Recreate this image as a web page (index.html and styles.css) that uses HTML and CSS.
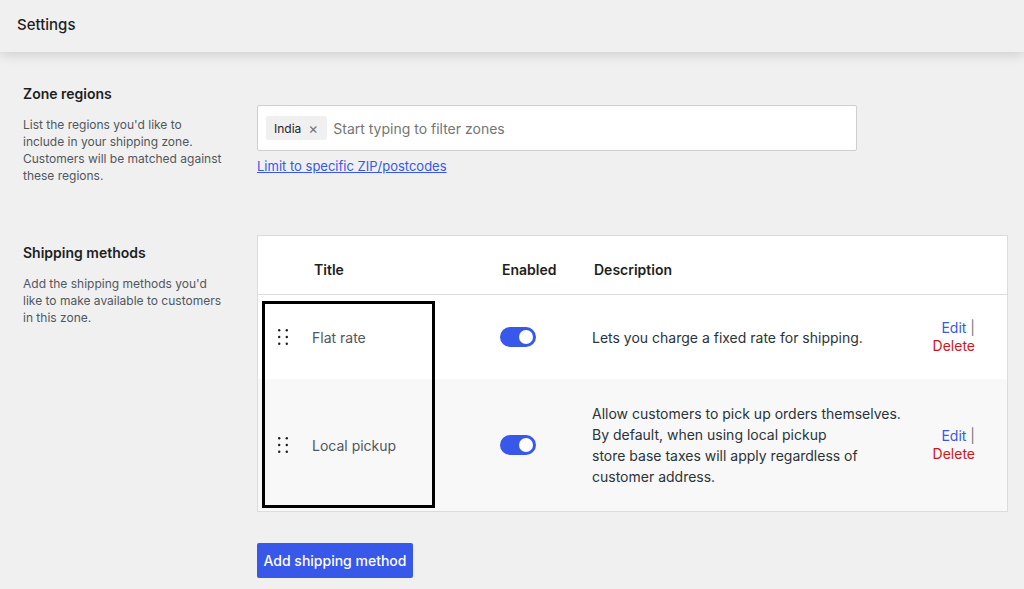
FILE: index.html
```html
<!DOCTYPE html>
<html lang="en">
<head>
    <meta charset="UTF-8">
    <meta name="viewport" content="width=device-width, initial-scale=1.0">
    <title>Shipping zone settings</title>
    <link rel="stylesheet" href="styles.css">
</head>
<body>
    <header class="top-bar">
        <h1 class="top-title">Settings</h1>
    </header>

    <main class="settings">
        <section class="settings-section zone-section">
            <div class="section-info">
                <h2 class="section-title">Zone regions</h2>
                <p class="section-desc">List the regions you'd like to<br>include in your shipping zone.<br>Customers will be matched against<br>these regions.</p>
            </div>
            <div class="section-body zone-body">
                <div class="zone-input">
                    <span class="chip">India <span class="chip-remove">&times;</span></span>
                    <span class="placeholder">Start typing to filter zones</span>
                </div>
                <a href="#" class="zone-link">Limit to specific ZIP/postcodes</a>
            </div>
        </section>

        <section class="settings-section methods-section">
            <div class="section-info methods-info">
                <h2 class="section-title">Shipping methods</h2>
                <p class="section-desc">Add the shipping methods you'd<br>like to make available to customers<br>in this zone.</p>
            </div>
            <div class="section-body">
                <div class="methods-table">
                    <div class="methods-row methods-head">
                        <div></div>
                        <div class="head-cell">Title</div>
                        <div class="head-cell">Enabled</div>
                        <div class="head-cell">Description</div>
                        <div></div>
                    </div>

                    <div class="methods-row">
                        <div class="cell-handle">
                            <svg class="handle" width="10" height="16" viewBox="0 0 10 16">
                                <circle cx="1.2" cy="1.2" r="1.2"/><circle cx="8.8" cy="1.2" r="1.2"/>
                                <circle cx="1.2" cy="8" r="1.2"/><circle cx="8.8" cy="8" r="1.2"/>
                                <circle cx="1.2" cy="14.8" r="1.2"/><circle cx="8.8" cy="14.8" r="1.2"/>
                            </svg>
                        </div>
                        <div class="cell-title">Flat rate</div>
                        <div class="cell-toggle"><span class="toggle"><span class="toggle-knob"></span></span></div>
                        <div class="cell-desc">Lets you charge a fixed rate for shipping.</div>
                        <div class="cell-actions">
                            <a href="#" class="edit-link">Edit</a> <span class="sep">|</span><br>
                            <a href="#" class="delete-link">Delete</a>
                        </div>
                    </div>

                    <div class="methods-row row-alt">
                        <div class="cell-handle">
                            <svg class="handle" width="10" height="16" viewBox="0 0 10 16">
                                <circle cx="1.2" cy="1.2" r="1.2"/><circle cx="8.8" cy="1.2" r="1.2"/>
                                <circle cx="1.2" cy="8" r="1.2"/><circle cx="8.8" cy="8" r="1.2"/>
                                <circle cx="1.2" cy="14.8" r="1.2"/><circle cx="8.8" cy="14.8" r="1.2"/>
                            </svg>
                        </div>
                        <div class="cell-title">Local pickup</div>
                        <div class="cell-toggle"><span class="toggle"><span class="toggle-knob"></span></span></div>
                        <div class="cell-desc">Allow customers to pick up orders themselves.<br>By default, when using local pickup<br>store base taxes will apply regardless of<br>customer address.</div>
                        <div class="cell-actions">
                            <a href="#" class="edit-link">Edit</a> <span class="sep">|</span><br>
                            <a href="#" class="delete-link">Delete</a>
                        </div>
                    </div>

                    <!-- highlight box over the title column -->
                    <div class="highlight-box"></div>
                </div>

                <button class="add-button">Add shipping method</button>
            </div>
        </section>
    </main>
</body>
</html>
```

FILE: styles.css
```css
* {
    margin: 0;
    padding: 0;
    box-sizing: border-box;
}

body {
    font-family: Inter, "Noto Sans", sans-serif;
    background: #f0f0f0;
    color: #1e1e1e;
    height: 589px;
    overflow: hidden;
}

/* top bar */
.top-bar {
    height: 52px;
    display: flex;
    align-items: center;
    padding: 0 0 4px 17px;
    background: #f0f0f0;
    box-shadow: 0 2px 12px rgba(0, 0, 0, 0.16);
    position: relative;
}

.top-title {
    font-size: 15px;
    font-weight: 500;
    color: #1e1e1e;
}

/* sections */
.settings {
    padding: 32px 16px 0 23px;
}

.settings-section {
    display: grid;
    grid-template-columns: 234px 1fr;
    align-items: start;
}

.zone-section {
    margin-bottom: 51px;
}

.methods-info {
    padding-top: 8px;
}

.section-title {
    font-size: 14px;
    font-weight: 600;
    line-height: 20px;
    color: #1e1e1e;
}

.section-desc {
    margin-top: 12px;
    font-size: 12px;
    line-height: 17px;
    color: #50575e;
    white-space: nowrap;
}

/* zone input */
.zone-body {
    padding-top: 21px;
}

.zone-input {
    width: 600px;
    height: 46px;
    background: #fff;
    border: 1px solid #cfcfcf;
    border-radius: 2px;
    display: flex;
    align-items: center;
    padding-left: 8px;
    gap: 6px;
}

.chip {
    display: inline-flex;
    align-items: center;
    gap: 7px;
    height: 24px;
    padding: 0 9px 0 8px;
    background: #f0f0f0;
    border-radius: 2px;
    font-size: 12px;
    color: #1e1e1e;
}

.chip-remove {
    font-size: 15px;
    color: #757575;
}

.placeholder {
    font-size: 14px;
    color: #757575;
}

.zone-link {
    display: inline-block;
    margin-top: 6px;
    font-size: 13px;
    line-height: 18px;
    color: #3858e9;
}

/* methods table */
.methods-table {
    position: relative;
    background: #fff;
    border: 1px solid #dcdcde;
}

.methods-row {
    display: grid;
    grid-template-columns: 54px 188px 92px 1fr auto;
    align-items: center;
    padding: 24px 32px 24px 0;
}

.methods-head {
    padding: 24px 32px 14px 0;
    border-bottom: 1px solid #dcdcde;
}

.head-cell {
    font-size: 14px;
    font-weight: 600;
    line-height: 20px;
    color: #1e1e1e;
    padding-left: 2px;
}

.row-alt {
    background: #f8f8f8;
}

.cell-handle {
    padding-left: 20px;
    display: flex;
}

.handle {
    fill: #1e1e1e;
}

.cell-title {
    font-size: 14px;
    color: #50575e;
}

.toggle {
    display: flex;
    justify-content: flex-end;
    align-items: center;
    width: 36px;
    height: 20px;
    padding: 0 3px;
    background: #3858e9;
    border-radius: 10px;
}

.toggle-knob {
    width: 14px;
    height: 14px;
    border-radius: 50%;
    background: #fff;
}

.cell-desc {
    font-size: 14px;
    line-height: 21px;
    color: #2c3338;
    white-space: nowrap;
}

.cell-actions {
    font-size: 14px;
    line-height: 18px;
    text-align: right;
}

.edit-link {
    color: #3858e9;
    text-decoration: none;
}

.delete-link {
    color: #cc1818;
    text-decoration: none;
}

.sep {
    color: #757575;
}

.highlight-box {
    position: absolute;
    left: 4px;
    top: 65px;
    width: 173px;
    height: 207px;
    border: 3px solid #000;
}

/* button */
.add-button {
    margin-top: 31px;
    height: 35px;
    width: 156px;
    border: none;
    border-radius: 2px;
    background: #3858e9;
    color: #fff;
    font-family: inherit;
    font-size: 14px;
    font-weight: 500;
    cursor: pointer;
}
```
